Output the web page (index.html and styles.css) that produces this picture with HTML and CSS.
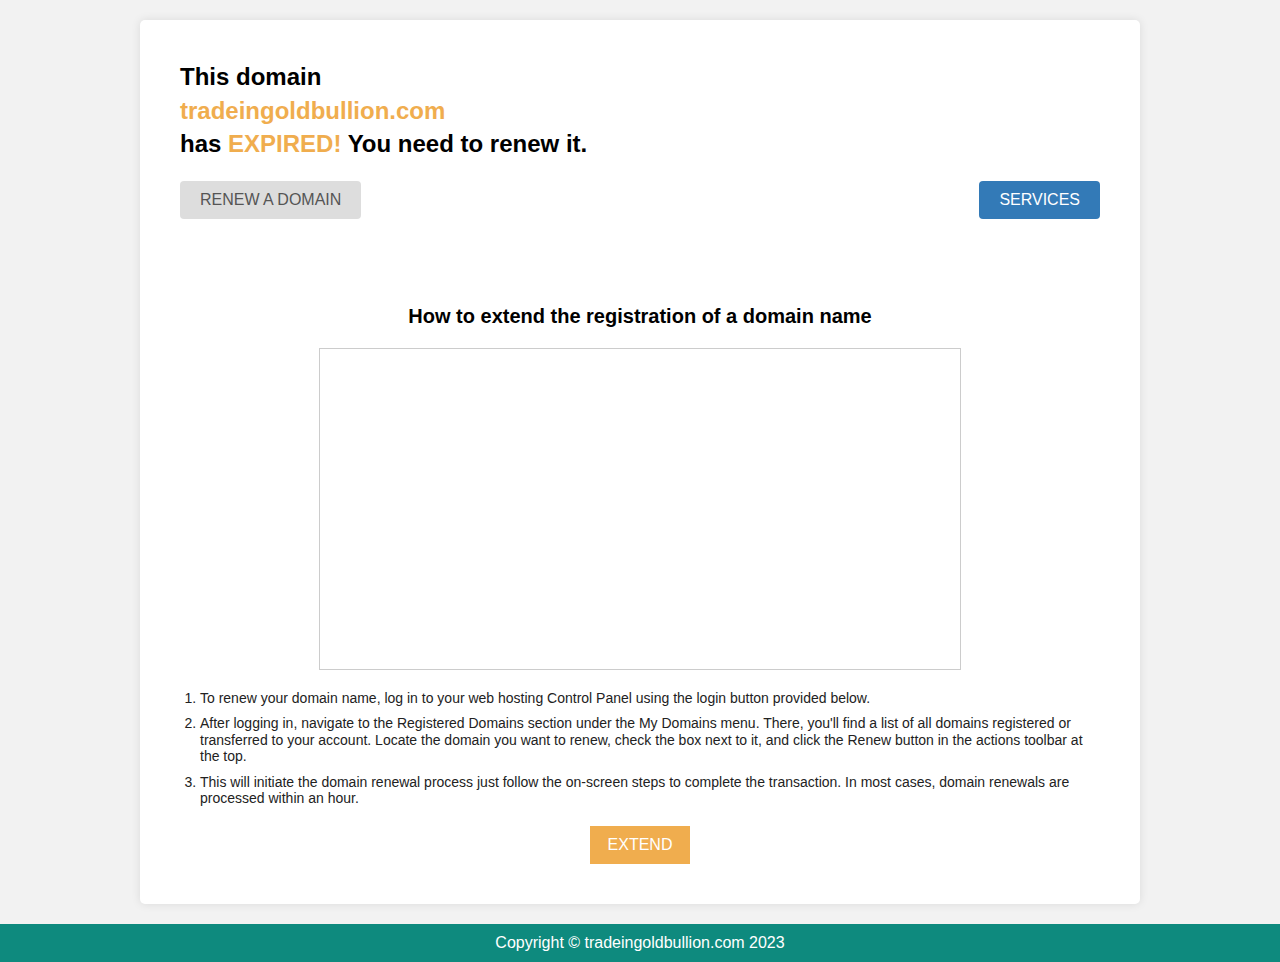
FILE: index.html
```html
<!DOCTYPE html>
<html lang="en">
<head>
<meta charset="utf-8">
<title>tradeingoldbullion.com has expired</title>
<link rel="stylesheet" href="styles.css">
</head>
<body>
<main class="card">
  <h2 class="title">This domain<br><span class="accent">tradeingoldbullion.com</span><br>has <span class="accent">EXPIRED!</span> You need to renew it.</h2>
  <div class="actions">
    <a class="btn btn-grey" href="#">RENEW A DOMAIN</a>
    <a class="btn btn-blue" href="#">SERVICES</a>
  </div>
  <section class="howto">
    <h3 class="howto-title">How to extend the registration of a domain name</h3>
    <div class="video"></div>
    <ol class="steps">
      <li>To renew your domain name, log in to your web hosting Control Panel using the login button provided below.</li>
      <li>After logging in, navigate to the Registered Domains section under the My Domains menu. There, you'll find a list of all domains registered or transferred to your account. Locate the domain you want to renew, check the box next to it, and click the Renew button in the actions toolbar at the top.</li>
      <li>This will initiate the domain renewal process just follow the on-screen steps to complete the transaction. In most cases, domain renewals are processed within an hour.</li>
    </ol>
    <div class="extend-wrap"><a class="btn btn-orange" href="#">EXTEND</a></div>
  </section>
</main>
<footer class="footer">Copyright © tradeingoldbullion.com 2023</footer>
</body>
</html>
```
FILE: styles.css
```css
html, body {
  margin: 0;
  padding: 0;
}
body {
  background: #f2f2f2;
  font-family: "Liberation Sans", Arial, Helvetica, sans-serif;
  color: #000;
}
.card {
  width: 1000px;
  box-sizing: border-box;
  margin: 20px auto 0;
  padding: 40px;
  background: #fff;
  border-radius: 5px;
  box-shadow: 0 0 10px rgba(0, 0, 0, 0.1);
}
.title {
  margin: 0 0 20px;
  font-size: 24px;
  line-height: 1.4;
  font-weight: bold;
}
.accent {
  color: #f0ad4e;
}
.actions {
  display: flex;
  justify-content: space-between;
}
.btn {
  display: inline-block;
  height: 38px;
  line-height: 38px;
  padding: 0 20px;
  font-size: 16px;
  text-decoration: none;
  border-radius: 4px;
  box-sizing: border-box;
}
.btn-grey {
  background: #dddddd;
  color: #555555;
}
.btn-blue {
  background: #337ab7;
  color: #fff;
}
.btn-orange {
  background: #f0ad4e;
  color: #fff;
  border-radius: 0;
  width: 100px;
  padding: 0;
  text-align: center;
}
.howto {
  padding-top: 86px;
}
.howto-title {
  margin: 0 0 20px;
  text-align: center;
  font-size: 20px;
  line-height: 23px;
}
.video {
  width: 640px;
  height: 320px;
  margin: 0 auto;
  border: 1px solid #cccccc;
}
.steps {
  margin: 20px 0 0;
  padding-left: 20px;
  font-size: 14px;
  line-height: 16.5px;
  color: #222;
}
.steps li {
  margin-bottom: 9px;
}
.steps li:last-child {
  margin-bottom: 0;
}
.extend-wrap {
  text-align: center;
  margin-top: 19px;
}
.footer {
  margin-top: 20px;
  height: 38px;
  line-height: 38px;
  background: #0e8a7e;
  color: #fff;
  text-align: center;
  font-size: 16px;
}
```
